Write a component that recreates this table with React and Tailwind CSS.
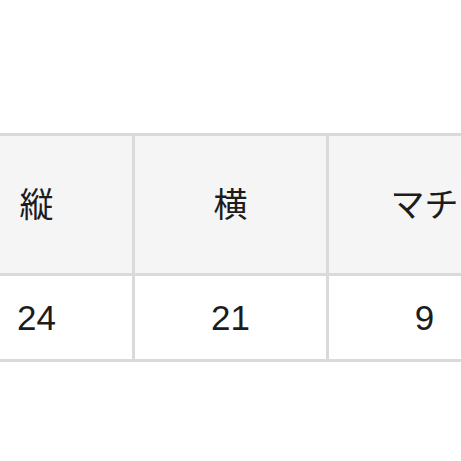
import React from 'react';

const headers = ['縦', '横', 'マチ'];
const values = ['24', '21', '9'];

const App = () => {
  return (
    <div
      className="w-[461px] h-[461px] overflow-hidden bg-white text-[#1c1c1c]"
      style={{ fontFamily: '"Liberation Sans", "Noto Sans CJK JP", sans-serif' }}
    >
      <div className="mt-[133px] ml-[-62px] w-max grid grid-cols-[191px_191px_191px] gap-[3px] p-[3px] bg-[#dadada]">
        {headers.map((h) => (
          <div key={h} className="h-[137px] bg-[#f5f5f5] flex items-center justify-center text-[34px] leading-none">
            {h}
          </div>
        ))}
        {values.map((v, i) => (
          <div key={i} className="h-[83px] bg-white flex items-center justify-center text-[35px] leading-none">
            {v}
          </div>
        ))}
      </div>
    </div>
  );
};

export default App;
